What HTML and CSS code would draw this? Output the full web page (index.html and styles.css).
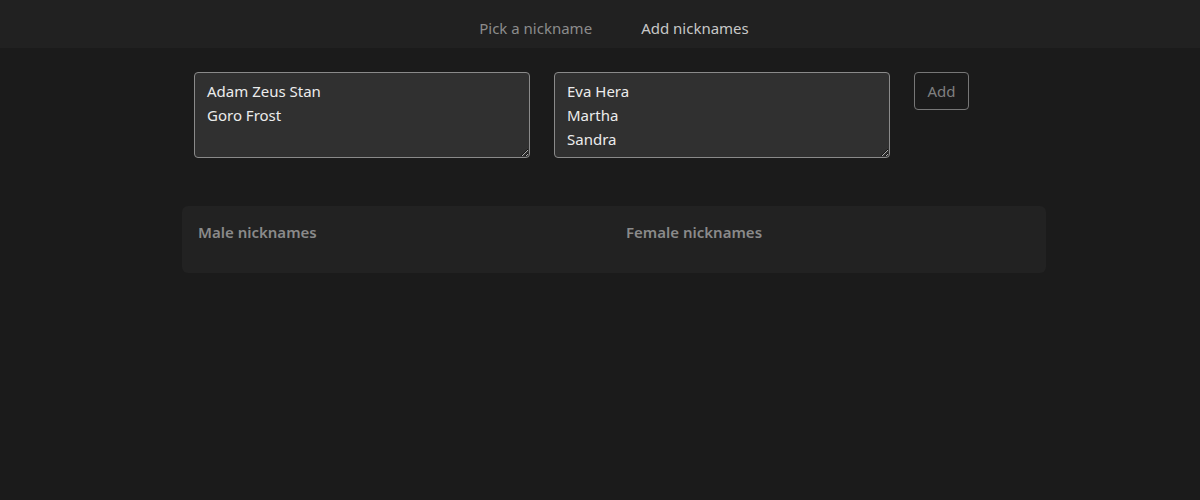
FILE: index.html
```html
<!DOCTYPE html>
<html lang="en">
<head>
<meta charset="utf-8">
<title>Nicknames</title>
<link rel="stylesheet" href="styles.css">
</head>
<body>
<nav class="topnav">
  <a class="navlink" href="#">Pick a nickname</a>
  <a class="navlink active" href="#">Add nicknames</a>
</nav>
<main class="container">
  <form class="add-row">
    <textarea class="names">Adam Zeus Stan
Goro Frost</textarea>
    <textarea class="names">Eva Hera
Martha
Sandra</textarea>
    <button type="button" class="add-btn">Add</button>
  </form>
  <section class="card">
    <div class="col"><h3 class="col-title">Male nicknames</h3></div>
    <div class="col"><h3 class="col-title">Female nicknames</h3></div>
  </section>
</main>
</body>
</html>
```

FILE: styles.css
```css
* { box-sizing: border-box; }
html, body { height: 100%; }
body {
  margin: 0;
  background: #1b1b1b;
  font-family: "Noto Sans", "Open Sans", sans-serif;
  font-size: 15px;
  color: #e6e6e6;
}
.topnav {
  height: 48px;
  background: #212121;
  display: flex;
  justify-content: center;
  align-items: center;
  gap: 49px;
  padding: 8px 0 0 28px;
}
.navlink {
  text-decoration: none;
  color: #8c8c8c;
  font-size: 15px;
}
.navlink.active { color: #c8c8c8; }
.container {
  width: 864px;
  margin: 0 auto;
  position: relative;
  left: 14px;
}
.add-row {
  display: flex;
  align-items: flex-start;
  gap: 24px;
  padding: 24px 12px 0;
  margin: 0;
}
.names {
  width: 336px;
  height: 86px;
  background: #303030;
  border: 1px solid #8a8a8a;
  border-radius: 4px;
  color: #ececec;
  font-family: inherit;
  font-size: 15px;
  line-height: 24px;
  padding: 6px 12px;
  margin: 0;
}
.add-btn {
  width: 55px;
  height: 38px;
  background: transparent;
  border: 1px solid #777;
  border-radius: 4px;
  color: #808080;
  font-family: inherit;
  font-size: 15px;
  padding: 0;
}
.card {
  margin-top: 48px;
  background: #222222;
  border-radius: 6px;
  padding: 16px 16px 31px;
  display: grid;
  grid-template-columns: 1fr 1fr;
  gap: 24px;
}
.col-title {
  margin: 0;
  font-size: 15px;
  line-height: 20px;
  font-weight: 600;
  color: #8a8a8a;
}
```
